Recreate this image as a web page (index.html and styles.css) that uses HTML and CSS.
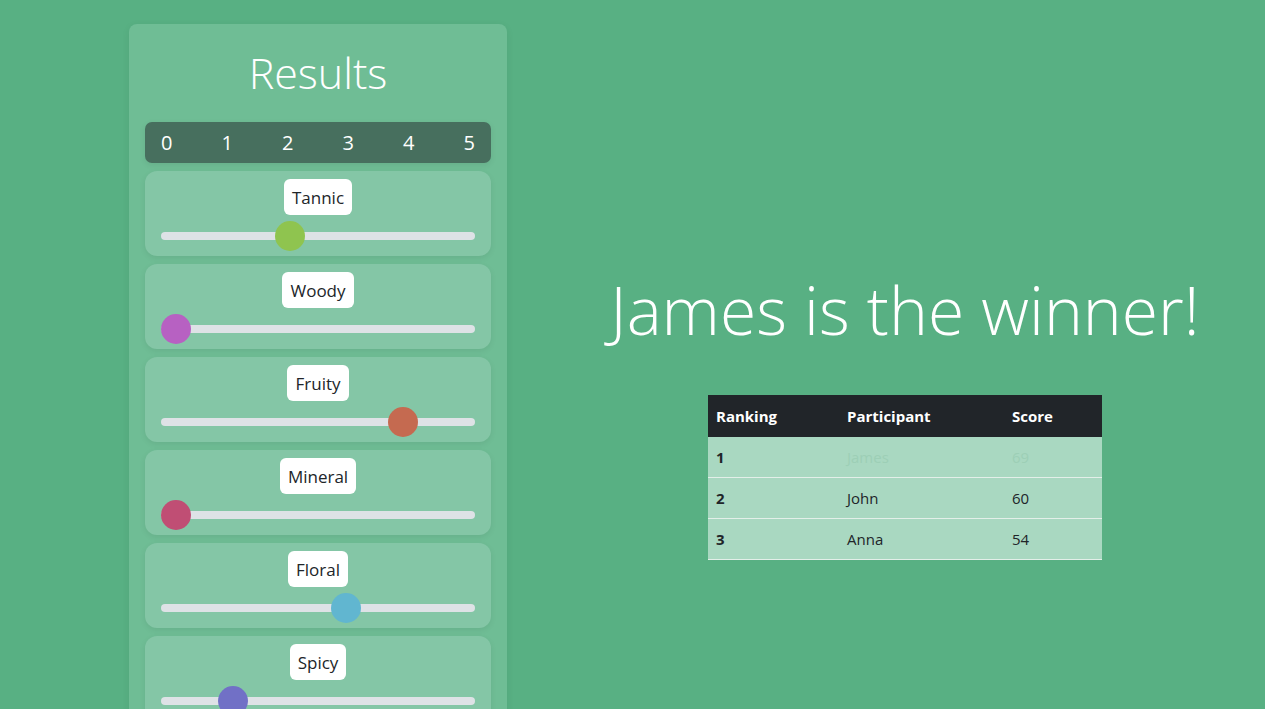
FILE: index.html
```html
<!DOCTYPE html>
<html>
<head>
<meta charset="utf-8">
<link rel="stylesheet" href="styles.css">
</head>
<body>
<div class="page">
  <aside class="panel">
    <h1 class="panel-title">Results</h1>
    <div class="scale">
      <span>0</span><span>1</span><span>2</span><span>3</span><span>4</span><span>5</span>
    </div>
    <div class="card">
      <div class="label">Tannic</div>
      <div class="slider"><div class="track"></div><div class="thumb t-tannic" style="left: calc((100% - 30px) * 0.4)"></div></div>
    </div>
    <div class="card">
      <div class="label">Woody</div>
      <div class="slider"><div class="track"></div><div class="thumb t-woody" style="left: calc((100% - 30px) * 0)"></div></div>
    </div>
    <div class="card">
      <div class="label">Fruity</div>
      <div class="slider"><div class="track"></div><div class="thumb t-fruity" style="left: calc((100% - 30px) * 0.8)"></div></div>
    </div>
    <div class="card">
      <div class="label">Mineral</div>
      <div class="slider"><div class="track"></div><div class="thumb t-mineral" style="left: calc((100% - 30px) * 0)"></div></div>
    </div>
    <div class="card">
      <div class="label">Floral</div>
      <div class="slider"><div class="track"></div><div class="thumb t-floral" style="left: calc((100% - 30px) * 0.6)"></div></div>
    </div>
    <div class="card">
      <div class="label">Spicy</div>
      <div class="slider"><div class="track"></div><div class="thumb t-spicy" style="left: calc((100% - 30px) * 0.2)"></div></div>
    </div>
  </aside>
  <main class="winner">
    <h2 class="winner-title">James is the winner!</h2>
    <table class="ranking">
      <thead>
        <tr><th class="c1">Ranking</th><th class="c2">Participant</th><th class="c3">Score</th></tr>
      </thead>
      <tbody>
        <tr class="first"><th>1</th><td>James</td><td>69</td></tr>
        <tr><th>2</th><td>John</td><td>60</td></tr>
        <tr><th>3</th><td>Anna</td><td>54</td></tr>
      </tbody>
    </table>
  </main>
</div>
</body>
</html>
```

FILE: styles.css
```css
* { box-sizing: border-box; }
html, body { margin: 0; padding: 0; }
body {
  background: #58b083;
  font-family: "Open Sans", "Noto Sans", sans-serif;
  color: #212529;
  overflow: hidden;
  height: 709px;
}
.page {
  display: flex;
  align-items: flex-start;
  padding-left: 129px;
  padding-top: 24px;
}
.panel {
  width: 378px;
  flex: none;
  background: #6fbd95;
  border-radius: 8px;
  padding: 14px 16px 16px;
  box-shadow: 0 2px 8px rgba(0,0,0,0.06);
}
.panel-title {
  margin: 0 0 14px;
  text-align: center;
  font-weight: 300;
  font-size: 43px;
  line-height: 70px;
  color: #fff;
}
.scale {
  height: 41px;
  background: #476f5e;
  border-radius: 7px;
  display: flex;
  justify-content: space-between;
  align-items: center;
  padding: 0 16px;
  color: #fff;
  font-size: 20px;
  box-shadow: 0 2px 6px rgba(0,0,0,0.08);
  margin-bottom: 8px;
}
.card {
  background: #84c6a6;
  border-radius: 12px;
  padding: 8px 16px 5px;
  display: flex;
  flex-direction: column;
  align-items: center;
  margin-bottom: 8px;
  box-shadow: 0 2px 6px rgba(0,0,0,0.07);
}
.label {
  background: #fff;
  border-radius: 6px;
  padding: 5px 8px 3px;
  font-size: 17px;
  line-height: 28px;
  color: #212529;
}
.slider {
  position: relative;
  width: 100%;
  height: 30px;
  margin-top: 6px;
  display: flex;
  align-items: center;
}
.track {
  width: 100%;
  height: 8px;
  border-radius: 4px;
  background: #dee2e6;
}
.thumb {
  position: absolute;
  top: 0;
  width: 30px;
  height: 30px;
  border-radius: 50%;
}
.t-tannic { background: #8fc44f; }
.t-woody { background: #b761c2; }
.t-fruity { background: #c56a50; }
.t-mineral { background: #c04e74; }
.t-floral { background: #61b6d0; }
.t-spicy { background: #7170c6; }

.winner {
  flex: 1;
  padding-left: 38px;
  padding-top: 240px;
  display: flex;
  flex-direction: column;
  align-items: center;
}
.winner-title {
  margin: 0;
  font-weight: 300;
  font-size: 66px;
  line-height: 90px;
  color: #fff;
  white-space: nowrap;
}
.ranking {
  margin-top: 41px;
  width: 394px;
  border-collapse: collapse;
  font-size: 15px;
}
.ranking th, .ranking td {
  text-align: left;
  padding: 8px;
  line-height: 24px;
}
.ranking thead th {
  background: #212529;
  color: #fff;
  font-weight: 700;
  padding: 9px 8px;
}
.ranking .c1 { width: 131px; }
.ranking .c2 { width: 165px; }
.ranking tbody tr {
  background: #a9d8c1;
  border-bottom: 1px solid #e3efe9;
}
.ranking tbody th { font-weight: 700; }
.ranking tbody td { font-weight: 400; }
.ranking tr.first td { color: #9dcfb6; }
```
